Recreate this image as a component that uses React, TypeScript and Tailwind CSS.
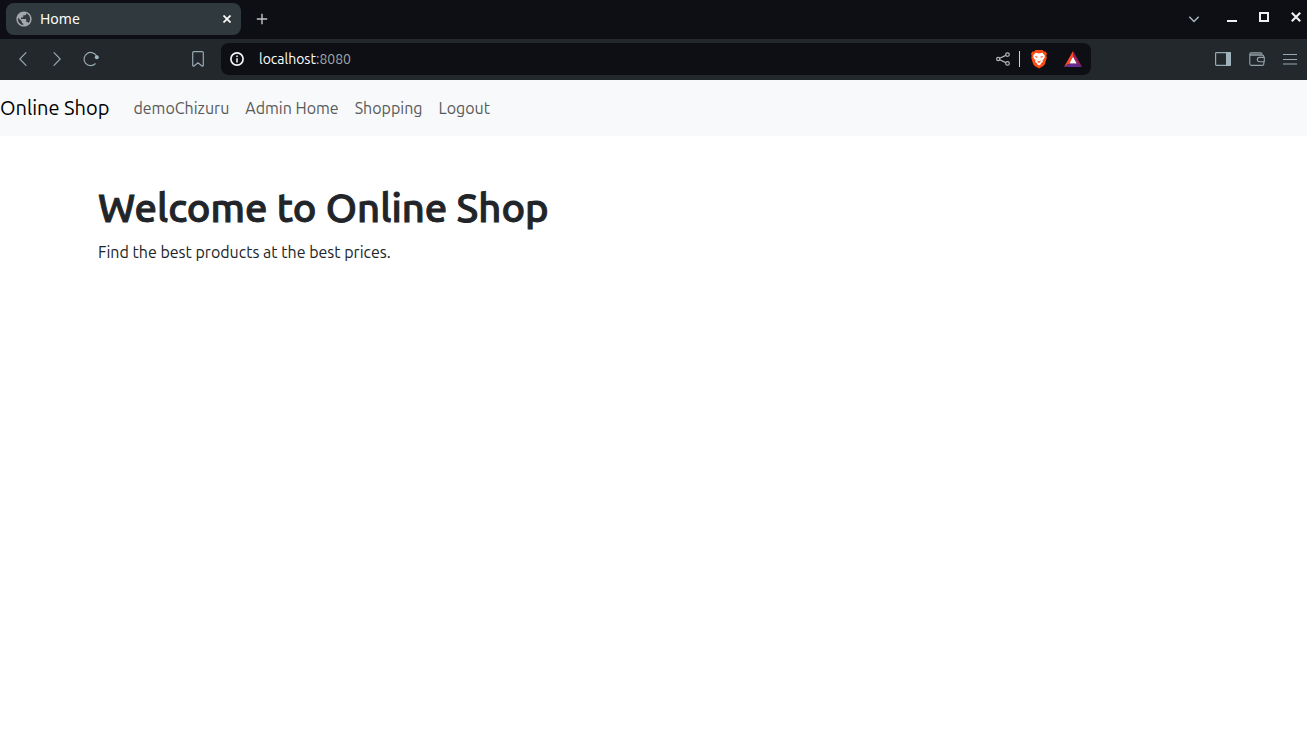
import type { ReactNode } from "react";
import { MdPublic } from "react-icons/md";

function IconButton({ label, className = "w-[34px]", children }: { label: string; className?: string; children: ReactNode }) {
  return (
    <button type="button" aria-label={label} className={`flex h-8 shrink-0 items-center justify-center ${className}`}>
      {children}
    </button>
  );
}

function TabStrip() {
  return (
    <div className="flex h-[39px] items-center bg-[#0d0f14] pb-px pl-1.5 text-white">
      <div className="flex h-8 w-[235px] items-center rounded-lg bg-[#30393d] pl-2.5">
        <MdPublic size={16} viewBox="1.5 1.5 21 21" color="#a2a6af" aria-hidden="true" />
        <span className="ml-2 flex-1 font-['Noto_Sans',sans-serif] text-sm">Home</span>
        <IconButton label="Close tab" className="w-7">
          <svg width="8" height="8" viewBox="0 0 8 8" fill="none" stroke="#fff" strokeWidth="1.7">
            <path d="m.5.5 7 7m0-7-7 7" />
          </svg>
        </IconButton>
      </div>
      <IconButton label="New tab" className="w-[42px]">
        <svg width="12" height="12" viewBox="0 0 12 12" fill="none" stroke="#c3c5c9" strokeWidth="1.4">
          <path d="M6 .8v10.4M.8 6h10.4" />
        </svg>
      </IconButton>
      <div className="ml-auto flex items-center">
        <IconButton label="Search tabs" className="mr-1 w-9">
          <svg width="12" height="12" viewBox="0 0 12 12" fill="none" stroke="#a9b9c1" strokeWidth="1.5">
            <path d="m1.3 3.8 4.7 4.7 4.7-4.7" />
          </svg>
        </IconButton>
        <IconButton label="Minimize" className="mb-1 w-8">
          <svg width="10" height="10" viewBox="0 0 10 10" fill="#f1f1f2">
            <path d="M0 8h10v2H0z" />
          </svg>
        </IconButton>
        <IconButton label="Maximize" className="mb-1 w-8">
          <svg width="10" height="10" viewBox="0 0 10 10" fill="none" stroke="#f1f1f2" strokeWidth="2">
            <path d="M1 1h8v8H1z" />
          </svg>
        </IconButton>
        <IconButton label="Close window" className="mb-1 w-[27px] pl-[5px]">
          <svg width="10" height="10" viewBox="0 0 10 10" fill="none" stroke="#f1f1f2" strokeWidth="2.1">
            <path d="m.8.8 8.4 8.4m0-8.4L.8 9.2" />
          </svg>
        </IconButton>
      </div>
    </div>
  );
}

function AddressBar() {
  return (
    <div className="flex h-8 min-w-0 flex-1 items-center rounded-lg bg-[#0d0f14] pr-px">
      <IconButton label="Site information" className="w-8">
        <svg width="14" height="14" viewBox="0 0 14 14" fill="none">
          <circle cx="7" cy="7" r="6.1" stroke="#f5f5f5" strokeWidth="1.7" />
          <path d="M7 6.2v4.2M7 3.6v1.5" stroke="#f5f5f5" strokeWidth="1.5" />
        </svg>
      </IconButton>
      <a href="http://localhost:8080" className="ml-1.5 flex-1 text-sm text-[#a4a6a9]">
        <span className="text-white">localhost</span>:8080
      </a>
      <IconButton label="Share" className="w-8">
        <svg width="14" height="14" viewBox="0 0 14 14" fill="none" stroke="#b4b7ba" strokeWidth="1.2">
          <circle cx="2.2" cy="7" r="1.6" />
          <circle cx="11.5" cy="2.6" r="1.8" />
          <circle cx="11.5" cy="11.4" r="1.8" />
          <path d="m3.7 6.3 6.1-2.9M3.7 7.7l6.1 2.9" />
        </svg>
      </IconButton>
      <span className="mr-0.5 h-4 w-px bg-[#d0d1d3]" />
      <IconButton label="Brave Shields">
        <svg width="18" height="20" viewBox="0 0 18 20">
          <path d="M5.5 1h7l1.3 1.5 1.7-.1L17 4.7l-.7 2 .5 1.8-2 6.8-1.5 1.8L9 19.4l-4.3-2.3-1.5-1.8-2-6.8.5-1.8-.7-2 1.5-2.3 1.7.1Z" fill="#ff4b13" />
          <path d="m5.6 3.8 3.4.6 3.4-.6 2.5 3-.5 2.1-2 2.6.6 1.2-2.1 1.5.3.9L9 16.4l-2.2-1.3.3-.9L5 12.7l.6-1.2-2-2.6-.5-2.1Z" fill="#fff" />
          <path d="m5 7 2.7.7-.5 1.1-1.7-.5Zm8 0-2.7.7.5 1.1 1.7-.5ZM7.3 11.6 9 12.6l1.7-1-.5 1.7L9 13.9l-1.2-.6Z" fill="#ff4b13" />
        </svg>
      </IconButton>
      <IconButton label="Brave Rewards">
        <svg width="18" height="16" viewBox="0 0 18 16">
          <path d="M9 0 0 16l5.3-3.6L9 5.8Z" fill="#ff4726" />
          <path d="m9 0 9 16-5.3-3.6L9 5.8Z" fill="#9e1f63" />
          <path d="m0 16 5.3-3.6h7.4L18 16Z" fill="#662d91" />
          <path d="m9 5.8 3.7 6.6H5.3Z" fill="#fff" />
        </svg>
      </IconButton>
    </div>
  );
}

function Toolbar() {
  return (
    <div className="flex h-[41px] items-center bg-[#22282b] pb-px pl-1.5">
      <IconButton label="Back">
        <svg width="8" height="14" viewBox="0 0 8 14" fill="none" stroke="#96a9b2" strokeWidth="1.2" strokeLinecap="round">
          <path d="M7 .7.8 7 7 13.3" />
        </svg>
      </IconButton>
      <IconButton label="Forward">
        <svg width="8" height="14" viewBox="0 0 8 14" fill="none" stroke="#96a9b2" strokeWidth="1.2" strokeLinecap="round">
          <path d="M1 .7 7.2 7 1 13.3" />
        </svg>
      </IconButton>
      <IconButton label="Reload">
        <svg width="16" height="16" viewBox="0 0 16 16" fill="none" stroke="#96a9b2" strokeWidth="1.2" strokeLinecap="round">
          <path d="M12.3 12.8A6.6 6.6 0 1 1 13.4 4.8" />
          <circle cx="13.8" cy="6.3" r="2" fill="#a0b5bf" stroke="none" />
        </svg>
      </IconButton>
      <IconButton label="Bookmark this page" className="mr-1.5 ml-[73px] w-[34px]">
        <svg width="12" height="16" viewBox="0 0 12 16" fill="none" stroke="#96a9b2" strokeWidth="1.2" strokeLinejoin="round">
          <path d="M1.8.7h8.4q1.1 0 1.1 1.1v13l-1 .5L6 11.8l-4.3 3.5-1-.5v-13Q.7.7 1.8.7Z" />
        </svg>
      </IconButton>
      <AddressBar />
      <div className="ml-[115px] flex">
        <IconButton label="Show sidebar">
          <svg width="16" height="14" viewBox="0 0 16 14" fill="none">
            <rect x=".6" y=".6" width="14.8" height="12.8" rx=".8" stroke="#96a9b2" strokeWidth="1.2" />
            <path d="M11 0h4q1 0 1 1v12q0 1-1 1h-4Z" fill="#a0b2ba" />
          </svg>
        </IconButton>
        <IconButton label="Wallet">
          <svg width="16" height="14" viewBox="0 0 16 14" fill="none" stroke="#93a2a9" strokeWidth="1.1">
            <path d="M1 1h11l1 2H2Z" fill="#93a2a9" fillOpacity=".5" stroke="none" />
            <path d="M14.8 9.7v2.2q0 1.5-1.5 1.5H2.5Q.8 13.4.8 11.8V2Q.8.7 2.2.7h9.5q1.2 0 1.2 1.2v.8M.8 2q.3 1.1 1.7 1.1h10.8q1.5 0 1.5 1.5v.6" />
            <path d="M15.3 5.4h-4.8a2.2 2.2 0 0 0 0 4.4h4.8Z" />
          </svg>
        </IconButton>
        <IconButton label="Menu" className="w-[33px] pr-px">
          <svg width="14" height="12" viewBox="0 0 14 12" fill="none" stroke="#96a9b2" strokeWidth="1.2">
            <path d="M0 1.5h14M0 6.5h14M0 11h14" />
          </svg>
        </IconButton>
      </div>
    </div>
  );
}

const links = ["demoChizuru", "Admin Home", "Shopping", "Logout"];

export default function App() {
  return (
    <div className="min-h-screen bg-white font-['Ubuntu','Noto_Sans',sans-serif] text-[#212529]">
      <header>
        <TabStrip />
        <Toolbar />
      </header>
      <nav className="flex h-14 items-center bg-[#f8f9fa]">
        <a href="#home" className="mr-6 text-xl text-black">Online Shop</a>
        <ul className="flex gap-4 text-base text-[#595a5a]">
          {links.map((link) => (
            <li key={link}>
              <a href="#">{link}</a>
            </li>
          ))}
        </ul>
      </nav>
      <main className="mx-auto max-w-[1111px] pt-12">
        <h1 className="text-[40px] leading-12 font-medium [-webkit-text-stroke:1px_#212529]">Welcome to Online Shop</h1>
        <p className="mt-2 text-base">Find the best products at the best prices.</p>
      </main>
    </div>
  );
}
